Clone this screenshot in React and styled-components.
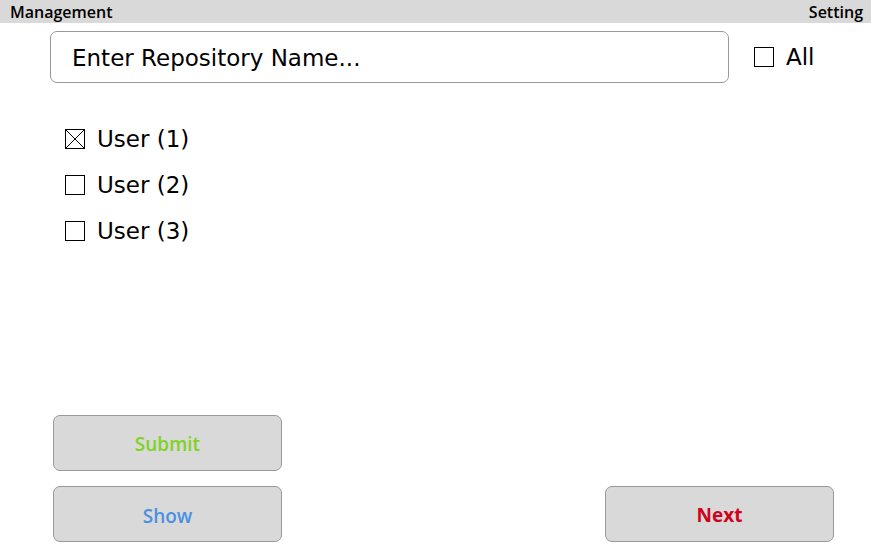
import styled, { createGlobalStyle } from 'styled-components';

const Global = createGlobalStyle`
  body {
    margin: 0;
    font-family: "DejaVu Sans", "Noto Sans", sans-serif;
    background: #fff;
  }
`;

const Page = styled.div`
  width: 871px;
  height: 557px;
  display: flex;
  flex-direction: column;
  overflow: hidden;
`;

const TopBar = styled.div`
  height: 23px;
  background: #d9d9d9;
  display: flex;
  justify-content: space-between;
  align-items: center;
  padding: 0 8px 0 10px;
  font-family: "Open Sans", sans-serif;
  font-size: 16px;
  font-weight: 600;
  color: #000;
`;

const SearchRow = styled.div`
  display: flex;
  align-items: center;
  margin: 8px 0 0 50px;
`;

const SearchBox = styled.div`
  width: 656px;
  height: 48px;
  border: 1px solid #999;
  border-radius: 7px;
  display: flex;
  align-items: center;
  padding: 2px 0 0 21px;
  box-sizing: content-box;
  font-size: 23px;
  color: #000;
`;

const CheckRow = styled.label`
  display: flex;
  align-items: center;
  gap: 12px;
  font-size: 23px;
  color: #000;
  height: 46px;
`;

const AllWrap = styled.div`
  margin-left: 25px;
`;

const Box = styled.span`
  width: 18px;
  height: 18px;
  border: 1px solid #000;
  display: inline-flex;
  flex-shrink: 0;
`;

const UserList = styled.div`
  display: flex;
  flex-direction: column;
  margin: 33px 0 0 65px;
`;

const Spacer = styled.div`
  flex: 1;
`;

const ButtonArea = styled.div`
  display: flex;
  flex-direction: column;
  gap: 15px;
  padding: 0 37px 15px 53px;
`;

const ButtonRow = styled.div`
  display: flex;
  justify-content: space-between;
`;

const Button = styled.button`
  width: 229px;
  height: 56px;
  background: #d9d9d9;
  border: 1px solid #999;
  border-radius: 7px;
  font-family: "Open Sans", "Noto Sans", sans-serif;
  font-size: 19px;
  font-weight: ${p => (p.bold ? 700 : 600)};
  color: ${p => p.color};
  padding: ${p => (p.low ? '3px 0 0' : '1px 0 0')};
`;

const CheckBox = ({ checked }) => (
  <Box>
    {checked && (
      <svg width="18" height="18" viewBox="0 0 18 18">
        <path d="M0 0L18 18M18 0L0 18" stroke="#000" strokeWidth="1" />
      </svg>
    )}
  </Box>
);

const App = () => (
  <Page>
    <Global />
    <TopBar>
      <span>Management</span>
      <span>Setting</span>
    </TopBar>
    <SearchRow>
      <SearchBox>Enter Repository Name...</SearchBox>
      <AllWrap>
        <CheckRow>
          <CheckBox />
          All
        </CheckRow>
      </AllWrap>
    </SearchRow>
    <UserList>
      <CheckRow><CheckBox checked />User (1)</CheckRow>
      <CheckRow><CheckBox />User (2)</CheckRow>
      <CheckRow><CheckBox />User (3)</CheckRow>
    </UserList>
    <Spacer />
    <ButtonArea>
      <ButtonRow>
        <Button color="#7ed321">Submit</Button>
      </ButtonRow>
      <ButtonRow>
        <Button color="#4a90e2" low>Show</Button>
        <Button color="#d0021b" bold>Next</Button>
      </ButtonRow>
    </ButtonArea>
  </Page>
);

export default App;
